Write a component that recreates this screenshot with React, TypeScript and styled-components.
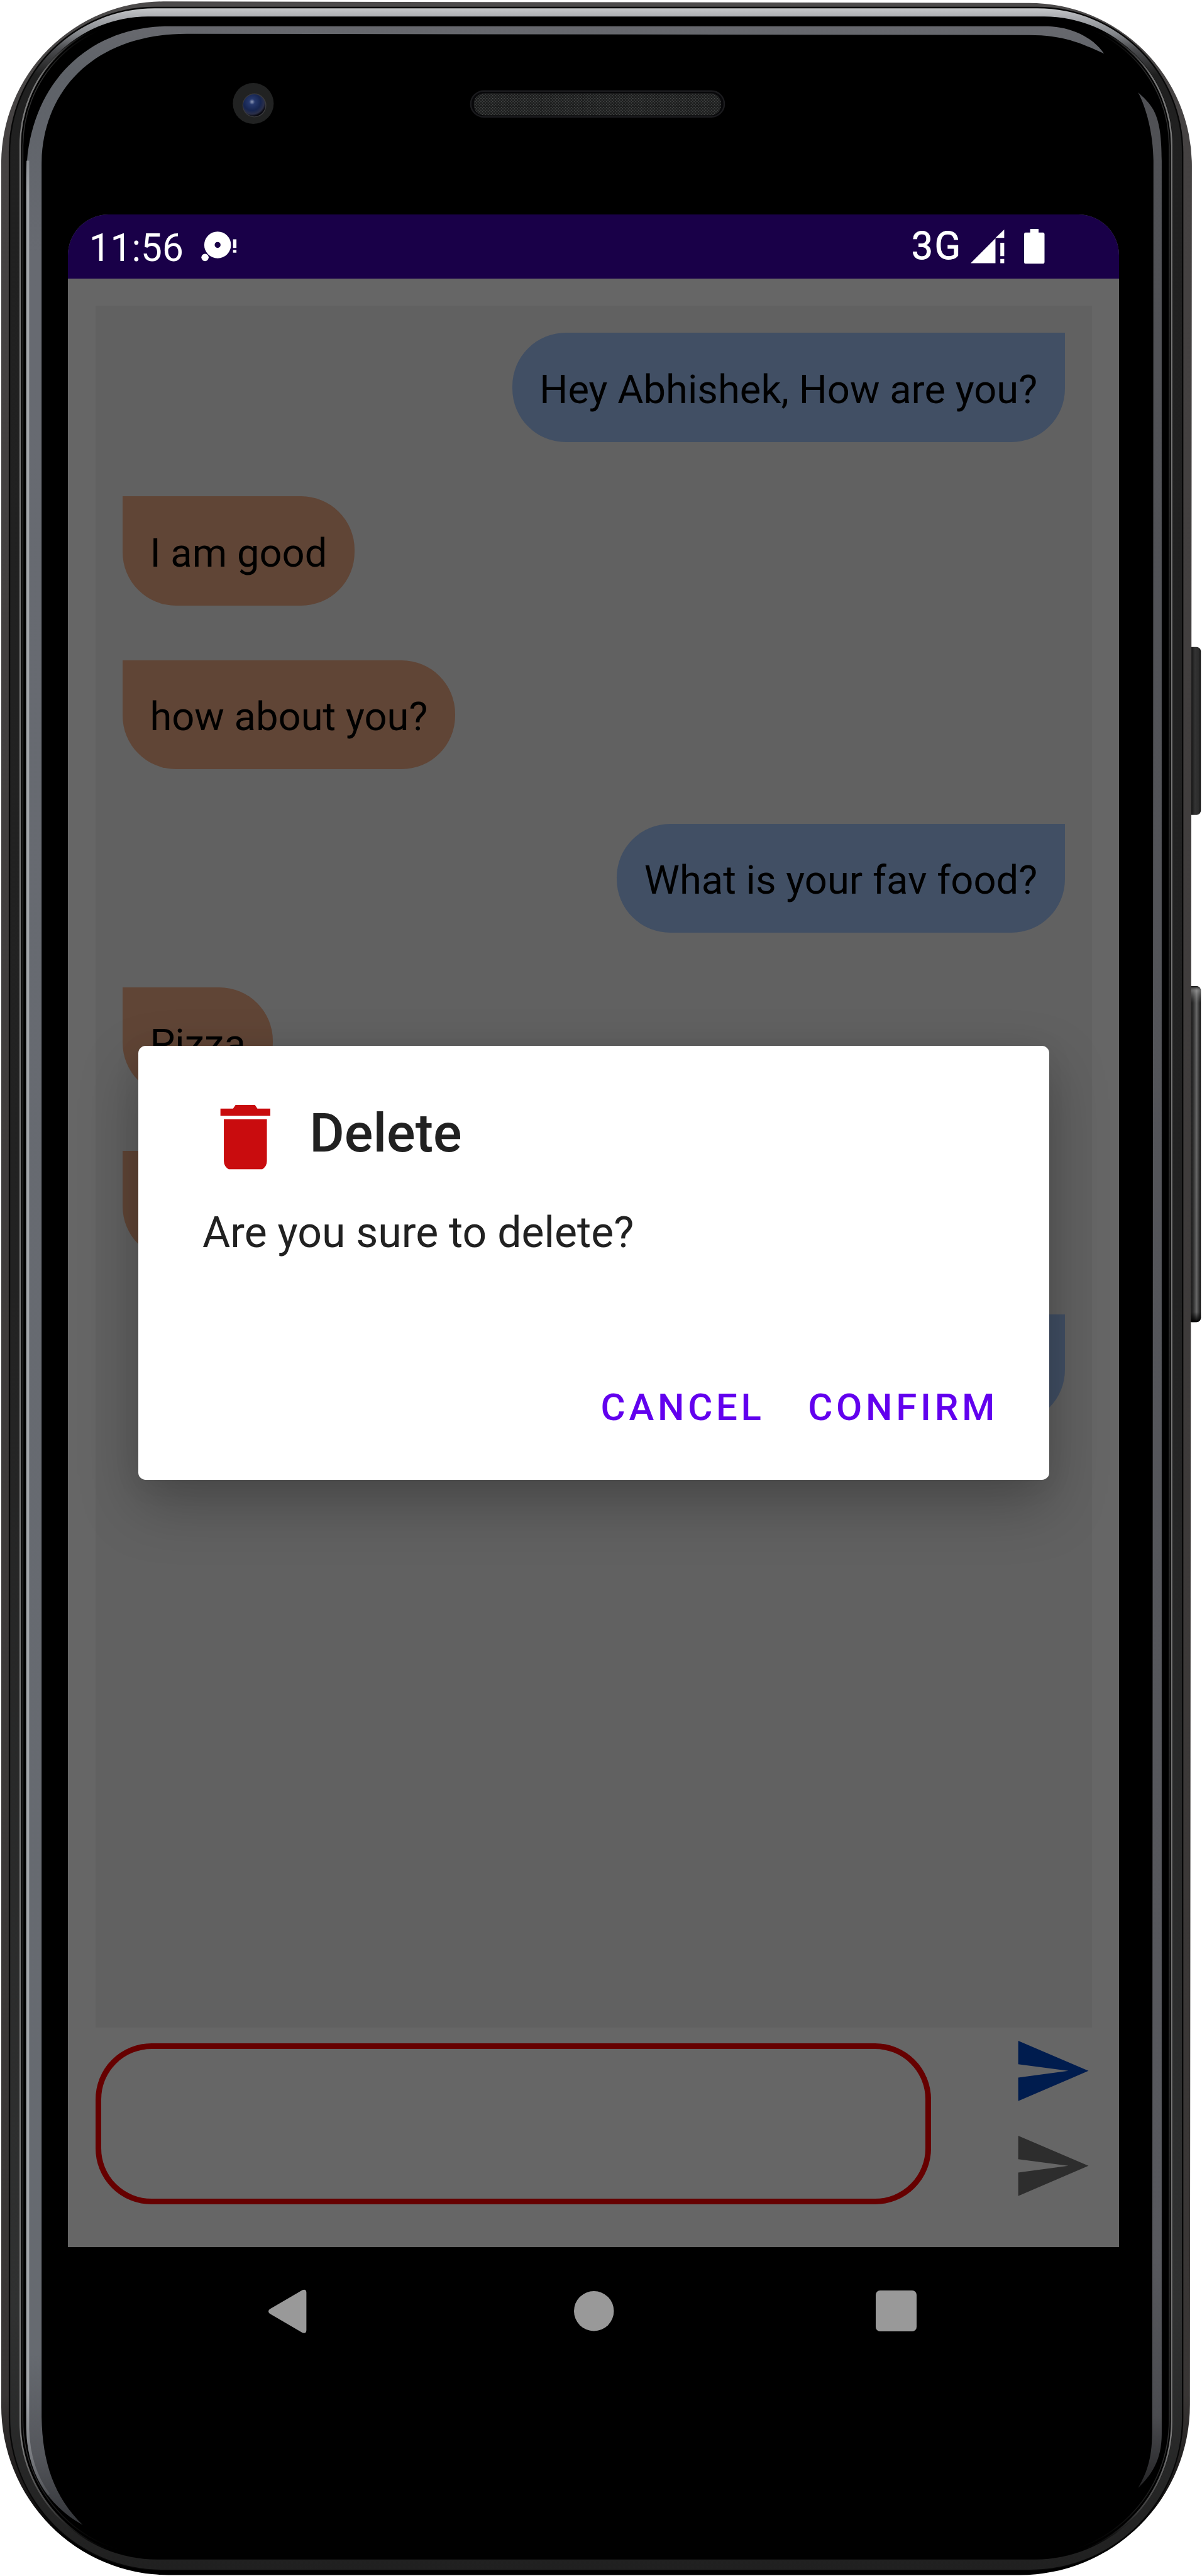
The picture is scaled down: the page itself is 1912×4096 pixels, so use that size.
import React from 'react';
import styled, { createGlobalStyle } from 'styled-components';

/* 1rem is 100 device units, so 0.56rem is 56 units of the handset artwork. */
const GlobalStyle = createGlobalStyle`
  html { font-size: 77.4px; }
  body { margin: 0; background: #fff; overflow: hidden; }
  * { box-sizing: border-box; }
`;

const Device = styled.main`
  position: relative;
  width: 24.7rem;
  height: 52.92rem;
  padding: 4.4rem 1.7rem 4.12rem 1.4rem;
  overflow: hidden;
  font-family: Roboto, 'Liberation Sans', sans-serif;
`;

const Chassis = styled.svg`
  position: absolute;
  inset: 0;
  width: 100%;
  height: 100%;
`;

const Screen = styled.section`
  position: relative;
  display: flex;
  flex-direction: column;
  width: 21.6rem;
  height: 44.4rem;
  border-radius: 0.84rem 0.84rem 0 0;
  overflow: hidden;
  background: #666;
`;

const StatusBar = styled.header`
  display: flex;
  align-items: center;
  justify-content: space-between;
  height: 1.32rem;
  padding: 0 1.54rem 0 0.43rem;
  background: #190048;
  color: #fff;
`;

const StatusGroup = styled.div`
  display: flex;
  align-items: center;
`;

const Clock = styled.span`
  width: 2.31rem;
  padding-top: 0.07rem;
  font-size: 0.78rem;
  line-height: 1rem;
`;

const Network = styled.span`
  width: 1.22rem;
  font-size: 0.79rem;
  font-weight: 400;
  line-height: 1rem;
  letter-spacing: 0.03rem;
  -webkit-text-stroke: 0.012rem #fff;
`;

const Glyph = styled.svg<{ $w: number; $h: number }>`
  display: block;
  flex: none;
  width: ${(p) => p.$w / 100}rem;
  height: ${(p) => p.$h / 100}rem;
  overflow: visible;
`;

const HomeGlyph = styled(Glyph)`
  margin-left: 0.1rem;
`;

const BatteryGlyph = styled(Glyph)`
  margin-left: 0.4rem;
`;

const ChatPage = styled.div`
  display: flex;
  flex-direction: column;
  height: 40.44rem;
  padding: 0.56rem 0.56rem 0;
`;

const MessageList = styled.ul`
  display: flex;
  flex-direction: column;
  gap: 1.12rem;
  height: 35.38rem;
  margin: 0;
  padding: 0.56rem;
  list-style: none;
  background: #616161;
`;

const Bubble = styled.li<{ $mine: boolean }>`
  align-self: ${(p) => (p.$mine ? 'flex-end' : 'flex-start')};
  flex: none;
  min-width: 3rem;
  height: 2.24rem;
  padding: 0.6rem 0.56rem 0.52rem;
  border-radius: ${(p) => (p.$mine ? '1.1rem 0 1.1rem 1.1rem' : '0 1.1rem 1.1rem 1.1rem')};
  background: ${(p) => (p.$mine ? '#414f64' : '#604536')};
  color: #000;
  font-size: 0.818rem;
  line-height: 1.12rem;
  white-space: nowrap;
`;

const Composer = styled.form`
  display: flex;
  justify-content: space-between;
  align-items: flex-start;
`;

const Input = styled.div`
  width: 17.18rem;
  height: 3.3rem;
  margin-top: 0.32rem;
  border: 0.12rem solid #660000;
  border-radius: 1.15rem;
`;

const SendColumn = styled.div`
  display: flex;
  flex-direction: column;
  gap: 0.31rem;
  padding-top: 0.055rem;
`;

const NavBar = styled.nav`
  display: flex;
  align-items: center;
  justify-content: space-between;
  height: 2.64rem;
  padding: 0 4.16rem 0.005rem 4.12rem;
  background: #000;
`;

const Dialog = styled.div`
  position: absolute;
  left: 1.44rem;
  top: 17.08rem;
  display: flex;
  flex-direction: column;
  width: 18.72rem;
  height: 8.92rem;
  padding: 1rem 1.04rem 0.99rem 1.32rem;
  border-radius: 0.15rem;
  background: #fff;
  box-shadow: 0 0.5rem 1.2rem rgba(0, 0, 0, 0.25), 0 0.1rem 0.6rem rgba(0, 0, 0, 0.06);
  color: #212121;
`;

const DialogHeader = styled.div`
  display: flex;
  align-items: center;
  gap: 0.44rem;
  height: 1.76rem;
`;

const DialogTitle = styled.h2`
  margin: 0;
  padding-bottom: 0.15rem;
  font-size: 1.1rem;
  font-weight: 500;
  line-height: 1.3rem;
`;

const DialogMessage = styled.p`
  margin: 0.57rem 0 0;
  font-size: 0.878rem;
  line-height: 1.04rem;
`;

const DialogActions = styled.div`
  display: flex;
  justify-content: flex-end;
  gap: 0.885rem;
  margin-top: auto;
`;

const TextButton = styled.button`
  padding: 0;
  border: 0;
  background: none;
  color: #6200ee;
  font-family: inherit;
  font-size: 0.775rem;
  font-weight: 500;
  line-height: 1rem;
  letter-spacing: 0.095em;
`;

/* Rounded rectangle with separate radii for the top and bottom corners. */
const shell = (l: number, t: number, r: number, b: number, top: number, bottom: number) =>
  `M${l} ${t + top}A${top} ${top} 0 0 1 ${l + top} ${t}H${r - top}A${top} ${top} 0 0 1 ${r} ${t + top}` +
  `V${b - bottom}A${bottom} ${bottom} 0 0 1 ${r - bottom} ${b}H${l + bottom}A${bottom} ${bottom} 0 0 1 ${l} ${b - bottom}Z`;

const PhoneArtwork = () => (
  <Chassis viewBox="0 0 2470 5292" preserveAspectRatio="none" aria-hidden="true">
    <defs>
      <linearGradient id="rim" x1="0" y1="0" x2="0" y2="5292" gradientUnits="userSpaceOnUse">
        <stop offset="0" stopColor="#4d4b4b" />
        <stop offset="0.05" stopColor="#454242" />
        <stop offset="0.93" stopColor="#383534" />
        <stop offset="0.965" stopColor="#1c1a1a" />
        <stop offset="0.985" stopColor="#000" />
      </linearGradient>
      <linearGradient id="band" x1="0" y1="17" x2="0" y2="5279" gradientUnits="userSpaceOnUse">
        <stop offset="0" stopColor="#c4c6c8" />
        <stop offset="0.003" stopColor="#aeb0b4" />
        <stop offset="0.01" stopColor="#84878b" />
        <stop offset="0.016" stopColor="#4a4b4e" />
        <stop offset="0.026" stopColor="#202020" />
        <stop offset="0.5" stopColor="#222" />
        <stop offset="0.9" stopColor="#303131" />
        <stop offset="1" stopColor="#202020" />
      </linearGradient>
      <linearGradient id="hair" x1="0" y1="0" x2="0" y2="5292" gradientUnits="userSpaceOnUse">
        <stop offset="0.012" stopColor="#777" stopOpacity="0" />
        <stop offset="0.03" stopColor="#777" />
        <stop offset="0.95" stopColor="#777" />
        <stop offset="0.975" stopColor="#666" stopOpacity="0.6" />
        <stop offset="0.99" stopColor="#444" stopOpacity="0" />
      </linearGradient>
      <linearGradient id="glint" x1="0" y1="0" x2="0" y2="5200" gradientUnits="userSpaceOnUse">
        <stop offset="0" stopColor="#6c6c71" />
        <stop offset="0.03" stopColor="#5e6268" />
        <stop offset="0.1" stopColor="#676a71" />
        <stop offset="0.93" stopColor="#666a70" />
        <stop offset="0.97" stopColor="#54565b" />
        <stop offset="1" stopColor="#303236" />
      </linearGradient>
      <linearGradient id="glintEdge" x1="0" y1="200" x2="0" y2="5160" gradientUnits="userSpaceOnUse">
        <stop offset="0" stopColor="#a2a5a9" stopOpacity="0" />
        <stop offset="0.04" stopColor="#a2a5a9" />
        <stop offset="0.95" stopColor="#a2a5a9" />
        <stop offset="1" stopColor="#a2a5a9" stopOpacity="0" />
      </linearGradient>
      <linearGradient id="glintRight" x1="0" y1="190" x2="0" y2="5111" gradientUnits="userSpaceOnUse">
        <stop offset="0" stopColor="#505155" />
        <stop offset="0.9" stopColor="#58595e" />
        <stop offset="0.97" stopColor="#4b4c50" />
        <stop offset="1" stopColor="#242426" />
      </linearGradient>
      <linearGradient id="power" x1="2446" y1="0" x2="2468" y2="0" gradientUnits="userSpaceOnUse">
        <stop offset="0" stopColor="#0c0c0c" />
        <stop offset="0.45" stopColor="#333" />
        <stop offset="0.8" stopColor="#2c2c2c" />
        <stop offset="1" stopColor="#111" />
      </linearGradient>
      <linearGradient id="volume" x1="2443" y1="0" x2="2468" y2="0" gradientUnits="userSpaceOnUse">
        <stop offset="0" stopColor="#0c0c0c" />
        <stop offset="0.35" stopColor="#2a2a2a" />
        <stop offset="0.65" stopColor="#666" />
        <stop offset="0.9" stopColor="#2a2a2a" />
        <stop offset="1" stopColor="#080808" />
      </linearGradient>
      <linearGradient id="keyShade" x1="0" y1="0" x2="0" y2="1">
        <stop offset="0" stopColor="#111" />
        <stop offset="0.014" stopColor="#bbb" stopOpacity="0.45" />
        <stop offset="0.05" stopColor="#888" stopOpacity="0" />
        <stop offset="0.97" stopColor="#000" stopOpacity="0" />
        <stop offset="1" stopColor="#000" />
      </linearGradient>
      <radialGradient id="lens" cx="0.4" cy="0.34" r="0.65">
        <stop offset="0" stopColor="#8f9ab8" />
        <stop offset="0.2" stopColor="#26386c" />
        <stop offset="0.6" stopColor="#162550" />
        <stop offset="0.85" stopColor="#2b2f48" />
        <stop offset="1" stopColor="#08080f" />
      </radialGradient>
      <pattern id="mesh" width="6" height="6" patternUnits="userSpaceOnUse">
        <rect width="6" height="6" fill="#181919" />
        <circle cx="1.5" cy="1.5" r="1.3" fill="#505252" />
        <circle cx="4.5" cy="4.5" r="1.3" fill="#505252" />
      </pattern>
    </defs>

    <rect x="2440" y="1329" width="28" height="345" rx="9" fill="url(#power)" />
    <rect x="2440" y="2026" width="28" height="690" rx="9" fill="url(#volume)" />
    <rect x="2440" y="2026" width="28" height="690" rx="9" fill="url(#keyShade)" />

    <path d="M2.5 337A333 333 0 0 1 335.5 3L2114 6A335 335 0 0 1 2449.5 341L2445.5 4940A350 350 0 0 1 2095 5290H346A344 348 0 0 1 2.5 4942Z" fill="url(#rim)" />
    <path d={shell(18, 14, 2432, 5281, 300, 315)} fill="#070707" />
    <path d={shell(21, 17, 2429, 5279, 297, 312)} fill="url(#band)" />
    <path d={shell(40, 34, 2410, 5258, 264, 283)} fill="#000" />
    <path d={shell(41.5, 36, 2408, 5257, 263, 282)} fill="none" stroke="url(#hair)" strokeWidth="3.2" />
    <path d={shell(47, 42, 2403, 5250, 258, 278)} fill="none" stroke="url(#hair)" strokeOpacity="0.4" strokeWidth="2" />

    <path
      d="M54 367C54 180 175 54 348 54H2154C2200 56 2245 75 2269 110C2220 88 2185 72 2115 72L384 69.5C195 69.5 85.5 185 85.5 340V4965C87 5060 112 5130 170 5187C95 5145 54 5075 54 4985Z"
      fill="url(#glint)"
    />
    <path d="M57 330V4990Q59 5070 100 5125" fill="none" stroke="url(#glintEdge)" strokeWidth="6" />
    <path
      d="M2339 190C2370 218 2387.500 235 2387.500 330V5000C2387.500 5055 2366 5085 2339 5111C2360 5075 2368 5045 2368 4990L2370.500 330C2370 275 2356 222 2339 190Z"
      fill="url(#glintRight)"
    />

    <rect x="967.500" y="187" width="521" height="53" rx="26.500" fill="#08080a" stroke="#1b1b1e" strokeWidth="3" />
    <rect x="974" y="192" width="508" height="45" rx="21" fill="url(#mesh)" />

    <circle cx="520.500" cy="212.500" r="42" fill="#212222" />
    <circle cx="522.800" cy="216.500" r="24.500" fill="#3a3a3c" />
    <circle cx="522.500" cy="216.500" r="22.800" fill="url(#lens)" />
  </Chassis>
);

const DebugIcon = () => (
  <Glyph $w={73} $h={62} viewBox="414 476 73 62">
    <path
      fill="#fff"
      fillRule="evenodd"
      d="M447.800 476.200a27.500 27.500 0 1 1 0 55a27.500 27.500 0 1 1 0-55zM447.800 497.600a6.100 6.100 0 1 0 0 12.200a6.100 6.100 0 1 0 0-12.200z"
    />
    <circle cx="421.900" cy="529.400" r="7.500" fill="#fff" />
    <path fill="#fff" d="M479.500 492h7v18h-7zM479.500 514h7v5.600h-7z" />
  </Glyph>
);

const SignalIcon = () => (
  <Glyph $w={69} $h={69} viewBox="1995 471 69 69">
    <path fill="#fff" d="M1995 540L2046 489V540zM2046 488L2064 471V488zM2056 498h8v27.700h-8zM2056 531.500h8v8.500h-8z" />
  </Glyph>
);

const BatteryIcon = () => (
  <BatteryGlyph $w={42} $h={72} viewBox="2104 470 42 72">
    <path fill="#fff" d="M2116.500 470h17.300v7.500H2143q3 0 3 3V538.500q0 3-3 3H2107q-3 0-3-3V480.500q0-3 3-3H2116.500z" />
  </BatteryGlyph>
);

const TrashIcon = () => (
  <Glyph $w={176} $h={176} viewBox="416 2248 176 176">
    <path
      fill="#c90c0e"
      d="M484 2270H524L529 2277.500H555.500V2292H453V2277.500H479ZM460 2299H548.500V2385Q548.500 2396 539 2402H470Q460 2396 460 2385Z"
    />
  </Glyph>
);

const SendIcon = ({ color }: { color: string }) => (
  <Glyph $w={165} $h={165} viewBox="0 0 24 24">
    <path fill={color} d="M2.010 21L23 12 2.010 3 2 10l15 2-15 2z" />
  </Glyph>
);

const messages = [
  { mine: true, text: 'Hey Abhishek, How are you?' },
  { mine: false, text: 'I am good' },
  { mine: false, text: 'how about you?' },
  { mine: true, text: 'What is your fav food?' },
  { mine: false, text: 'Pizza' },
  { mine: false, text: '' },
  { mine: true, text: '' },
];

export default function App() {
  return (
    <>
      <GlobalStyle />
      <Device>
        <PhoneArtwork />
        <Screen>
          <StatusBar>
            <StatusGroup>
              <Clock>11:56</Clock>
              <DebugIcon />
            </StatusGroup>
            <StatusGroup>
              <Network>3G</Network>
              <SignalIcon />
              <BatteryIcon />
            </StatusGroup>
          </StatusBar>

          <ChatPage>
            <MessageList>
              {messages.map((m, i) => (
                <Bubble key={i} $mine={m.mine}>
                  {m.text}
                </Bubble>
              ))}
            </MessageList>
            <Composer>
              <Input />
              <SendColumn>
                <SendIcon color="#001c4e" />
                <SendIcon color="#2d2d2d" />
              </SendColumn>
            </Composer>
          </ChatPage>

          <NavBar>
            <Glyph $w={78} $h={91} viewBox="0 0 78 91">
              <path fill="#999" d="M2.500 41L70 1.500Q78 -1 78 7V84Q78 92 70 89.500L2.500 50Q-2.500 45.500 2.500 41Z" />
            </Glyph>
            <HomeGlyph $w={82} $h={82} viewBox="0 0 82 82">
              <circle cx="41" cy="41" r="41" fill="#999" />
            </HomeGlyph>
            <Glyph $w={84} $h={84} viewBox="0 0 84 84">
              <rect width="84" height="84" rx="9" fill="#999" />
            </Glyph>
          </NavBar>

          <Dialog role="dialog">
            <DialogHeader>
              <TrashIcon />
              <DialogTitle>Delete</DialogTitle>
            </DialogHeader>
            <DialogMessage>Are you sure to delete?</DialogMessage>
            <DialogActions>
              <TextButton>CANCEL</TextButton>
              <TextButton>CONFIRM</TextButton>
            </DialogActions>
          </Dialog>
        </Screen>
      </Device>
    </>
  );
}
